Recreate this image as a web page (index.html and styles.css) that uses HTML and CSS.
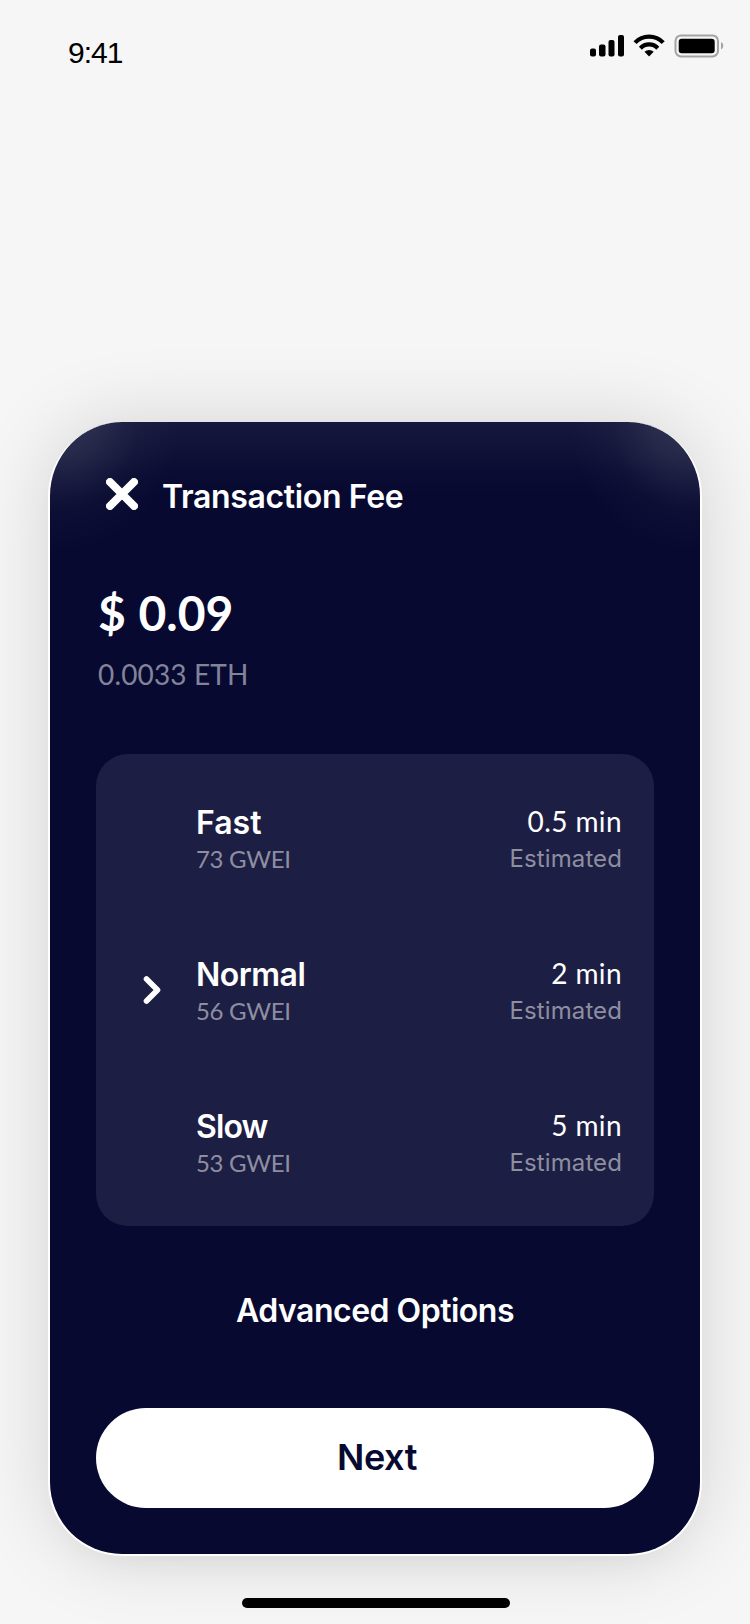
FILE: index.html
```html
<!DOCTYPE html>
<html lang="en">
<head>
<meta charset="utf-8">
<title>Transaction Fee</title>
<link rel="stylesheet" href="styles.css">
</head>
<body>
<header class="status">
  <span class="time">9:41</span>
  <svg class="status-icons" width="136" height="28" viewBox="0 0 136 28">
    <rect x="1" y="14.500" width="6" height="8" rx="2"/>
    <rect x="10" y="10.500" width="6.500" height="12" rx="2"/>
    <rect x="19.500" y="6" width="6" height="16.500" rx="2"/>
    <rect x="29" y="1" width="6" height="21.500" rx="2"/>
    <g fill="none" stroke="#000" stroke-width="4.200">
      <path d="M46 8.600a19.500 19.500 0 0 1 28.200 0"/>
      <path d="M51.400 14.200a12 12 0 0 1 17.400 0"/>
    </g>
    <path d="M55.500 17.800a6.600 6.600 0 0 1 9.200 0L60.100 22.600z"/>
    <rect x="86.500" y="1.400" width="42.500" height="21" rx="5.500" fill="none" stroke="#a3a3a3" stroke-width="2"/>
    <rect x="89.700" y="4.700" width="36" height="14.500" rx="3"/>
    <path d="M132 8v7.500a4.200 4.200 0 0 0 0-7.500z" fill="#a3a3a3"/>
  </svg>
</header>
<main class="card">
  <div class="card-head">
    <svg width="32" height="32" viewBox="0 0 32 32"><path d="M4 4l24 24M28 4L4 28" fill="none" stroke="#fff" stroke-width="8" stroke-linecap="round"/></svg>
    <h1 class="title">Transaction Fee</h1>
  </div>
  <p class="amount">$ 0.09</p>
  <p class="eth">0.0033 ETH</p>
  <ul class="speeds">
    <li class="speed">
      <span class="mark"></span>
      <div class="left"><div class="name fast">Fast</div><div class="gwei">73 GWEI</div></div>
      <div class="right"><div class="mins">0.5 min</div><div class="est">Estimated</div></div>
    </li>
    <li class="speed">
      <span class="mark"><svg width="18" height="28" viewBox="0 0 18 28"><path d="M3.500 3l11 11-11 11" fill="none" stroke="#fff" stroke-width="5.600" stroke-linecap="round" stroke-linejoin="round"/></svg></span>
      <div class="left"><div class="name">Normal</div><div class="gwei">56 GWEI</div></div>
      <div class="right"><div class="mins">2 min</div><div class="est">Estimated</div></div>
    </li>
    <li class="speed">
      <span class="mark"></span>
      <div class="left"><div class="name slow">Slow</div><div class="gwei">53 GWEI</div></div>
      <div class="right"><div class="mins">5 min</div><div class="est">Estimated</div></div>
    </li>
  </ul>
  <a class="advanced">Advanced Options</a>
  <button class="next">Next</button>
</main>
<div class="home"></div>
</body>
</html>
```
FILE: styles.css
```css
* { box-sizing: border-box; margin: 0; padding: 0; }
body {
  width: 750px;
  height: 1624px;
  overflow: hidden;
  background: #f6f6f6;
  font-family: Inter, "Open Sans", sans-serif;
  color: #fff;
  display: flex;
  flex-direction: column;
}
.status {
  height: 422px;
  padding: 34px 25px 0 68px;
  display: flex;
  justify-content: space-between;
  align-items: flex-start;
  color: #000;
}
.time {
  font: 30px/37px "Liberation Sans", Arial, sans-serif;
  letter-spacing: -1px;
}
.status-icons { display: block; }
.card {
  width: 654px;
  height: 1134px;
  margin-left: 48px;
  padding: 52px 46px 0;
  border: 2px solid #fff;
  border-top: 0;
  border-radius: 74px;
  background:
    radial-gradient(circle 120px at 10px 10px, rgba(255,255,255,.12), rgba(255,255,255,.09) 30%, rgba(255,255,255,.025) 65%, transparent),
    radial-gradient(circle 120px at 640px 10px, rgba(255,255,255,.12), rgba(255,255,255,.09) 30%, rgba(255,255,255,.025) 65%, transparent),
    linear-gradient(rgba(255,255,255,.06), rgba(255,255,255,.035) 28px, rgba(255,255,255,.01) 50px, transparent 75px),
    #070930;
  background-origin: padding-box;
  box-shadow: 0 0 80px rgba(0,0,0,.14), 0 20px 40px -20px rgba(0,0,0,.05);
  display: flex;
  flex-direction: column;
  flex: none;
}
.card-head {
  height: 40px;
  padding-left: 10px;
  display: flex;
  align-items: center;
  gap: 24px;
}
.title { font-size: 32px; line-height: 40px; font-weight: 600; padding-top: 6px; letter-spacing: -.35px; }
.amount { font: 700 48px/56px Lato, sans-serif; margin: 71px 0 0 2px; word-spacing: 1px; }
.eth { font: 28px/36px Lato, sans-serif; color: #83849a; margin: 15px 0 0 2px; letter-spacing: .15px; }
.speeds {
  list-style: none;
  height: 472px;
  margin-top: 62px;
  padding: 8px 32px 8px 47px;
  border-radius: 32px;
  background: #1d1e43;
}
.speed { height: 152px; display: flex; align-items: center; }
.mark { width: 53px; display: flex; }
.right { margin-left: auto; text-align: right; }
.left, .right { padding-top: 3px; }
.name { font-size: 32px; line-height: 39px; font-weight: 600; letter-spacing: -.5px; }
.fast { letter-spacing: 0; }
.slow { letter-spacing: -.9px; }
.mins { font: 28px/37px Lato, sans-serif; letter-spacing: .4px; }
.gwei { font: 24px/34px Lato, sans-serif; color: #8e8ea1; letter-spacing: -.3px; }
.est { font-size: 24px; line-height: 34px; padding-top: 2px; color: #8e8ea1; letter-spacing: .1px; }
.advanced { margin-top: 65px; font-size: 32px; line-height: 40px; font-weight: 600; text-align: center; letter-spacing: -.5px; }
.next {
  height: 100px;
  margin-top: 77px;
  padding: 0 0 2px 4px;
  border: 0;
  border-radius: 50px;
  background: #fff;
  color: #070930;
  font: 600 36px/98px Inter, sans-serif;
  letter-spacing: -.4px;
}
.home { flex: none; width: 268px; height: 10px; border-radius: 5px; background: #000; margin: 42px 0 0 242px; position: relative; }
```
